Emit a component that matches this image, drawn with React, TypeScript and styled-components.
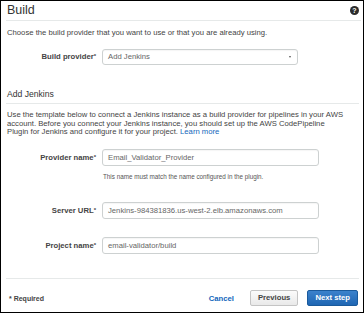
import React from "react";
import styled, { createGlobalStyle } from "styled-components";

const Global = createGlobalStyle`
  html, body { margin: 0; padding: 0; background: #fff; }
  * { box-sizing: border-box; }
`;

const Frame = styled.div`
  width: 364px;
  height: 313px;
  border: 1px solid #000;
  display: flex;
  flex-direction: column;
  font-family: "Liberation Sans", Arial, sans-serif;
  color: #444;
  background: #fff;
  overflow: hidden;
`;

const Body = styled.div`
  flex: 1;
  display: flex;
  flex-direction: column;
`;

const TitleBar = styled.div`
  display: flex;
  align-items: center;
  justify-content: space-between;
  height: 20px;
  margin: 0 2px 0 5px;
  padding: 0 2px 0 1px;
  border-bottom: 1px solid #e6e9e9;
`;

const Title = styled.h1`
  margin: 0;
  font-size: 12.5px;
  line-height: 19px;
  font-weight: normal;
  color: #333;
`;

const HelpIcon = styled.span`
  width: 9px;
  height: 9px;
  border-radius: 50%;
  background: #2b2b2b;
  color: #fff;
  font-size: 7px;
  font-weight: bold;
  line-height: 9px;
  text-align: center;
`;

const Text = styled.p<{ $top: number }>`
  margin: ${(p) => p.$top}px 4px 0 6px;
  font-size: 7.7px;
  line-height: 8.5px;
  color: #444;
`;

const Link = styled.a`
  color: #1166bb;
  text-decoration: none;
`;

const FieldRow = styled.div<{ $top: number }>`
  display: grid;
  grid-template-columns: 95px 1fr;
  column-gap: 6px;
  align-items: center;
  margin-top: ${(p) => p.$top}px;
`;

const Label = styled.label`
  text-align: right;
  font-size: 7.7px;
  font-weight: bold;
  color: #444;
`;

const Star = styled.span`
  font-size: 6px;
  vertical-align: 1px;
`;

const FieldBox = styled.div<{ $w: number; $h: number }>`
  width: ${(p) => p.$w}px;
  height: ${(p) => p.$h}px;
  border: 1px solid #cdd1d1;
  border-radius: 3px;
  background: #fff;
  box-shadow: inset 0 1px 1px rgba(0, 0, 0, 0.04);
  display: flex;
  align-items: center;
  justify-content: space-between;
  padding: 0 6px 0 5px;
  font-size: 7.7px;
  color: #666;
  white-space: nowrap;
`;

const Caret = styled.span`
  width: 0;
  height: 0;
  border-left: 1.6px solid transparent;
  border-right: 1.6px solid transparent;
  border-top: 2.6px solid #555;
`;

const Hint = styled.div`
  margin: 7px 0 0 102px;
  font-size: 6.3px;
  line-height: 8px;
  color: #555;
`;

const SectionHead = styled.h2`
  margin: 24px 4px 0 5px;
  padding: 0 0 4px 1px;
  font-size: 8.6px;
  line-height: 10px;
  font-weight: normal;
  color: #333;
  border-bottom: 1px solid #e6e9e9;
`;

const Footer = styled.div`
  display: flex;
  align-items: center;
  margin: 0 4px 0 5px;
  padding: 11px 1px 6px 3px;
  border-top: 1px solid #e6e9e9;
`;

const Required = styled.span`
  flex: 1;
  font-size: 7px;
  font-weight: bold;
  color: #444;
`;

const CancelLink = styled.a`
  font-size: 7.7px;
  font-weight: bold;
  color: #1166bb;
  margin-right: 16px;
`;

const Button = styled.button<{ $primary?: boolean }>`
  height: 16px;
  padding: 0 7px;
  margin-left: ${(p) => (p.$primary ? 9 : 0)}px;
  border-radius: 2px;
  font-family: inherit;
  font-size: 7.7px;
  font-weight: bold;
  line-height: 14px;
  border: 1px solid ${(p) => (p.$primary ? "#1a5a9c" : "#c4c4c4")};
  color: ${(p) => (p.$primary ? "#fff" : "#444")};
  background: ${(p) =>
    p.$primary
      ? "linear-gradient(#3b82cc, #1f66b3)"
      : "linear-gradient(#fbfbfb, #e9e9e9)"};
`;

export default function App() {
  return (
    <>
      <Global />
      <Frame>
        <Body>
          <TitleBar>
            <Title>Build</Title>
            <HelpIcon>?</HelpIcon>
          </TitleBar>
          <Text $top={8}>
            Choose the build provider that you want to use or that you are already using.
          </Text>
          <FieldRow $top={11}>
            <Label>
              Build provider<Star>*</Star>
            </Label>
            <FieldBox $w={196} $h={16}>
              Add Jenkins
              <Caret />
            </FieldBox>
          </FieldRow>

          <SectionHead>Add Jenkins</SectionHead>
          <Text $top={7.5}>
            Use the template below to connect a Jenkins instance as a build provider for pipelines in your AWS
            <br />
            account. Before you connect your Jenkins instance, you should set up the AWS CodePipeline
            <br />
            Plugin for Jenkins and configure it for your project. <Link>Learn more</Link>
          </Text>

          <FieldRow $top={12.5}>
            <Label>
              Provider name<Star>*</Star>
            </Label>
            <FieldBox $w={217} $h={17}>Email_Validator_Provider</FieldBox>
          </FieldRow>
          <Hint>This name must match the name configured in the plugin.</Hint>

          <FieldRow $top={21}>
            <Label>
              Server URL<Star>*</Star>
            </Label>
            <FieldBox $w={217} $h={17}>Jenkins-984381836.us-west-2.elb.amazonaws.com</FieldBox>
          </FieldRow>

          <FieldRow $top={17.5}>
            <Label>
              Project name<Star>*</Star>
            </Label>
            <FieldBox $w={217} $h={17}>email-validator/build</FieldBox>
          </FieldRow>
        </Body>
        <Footer>
          <Required>* Required</Required>
          <CancelLink>Cancel</CancelLink>
          <Button>Previous</Button>
          <Button $primary>Next step</Button>
        </Footer>
      </Frame>
    </>
  );
}
